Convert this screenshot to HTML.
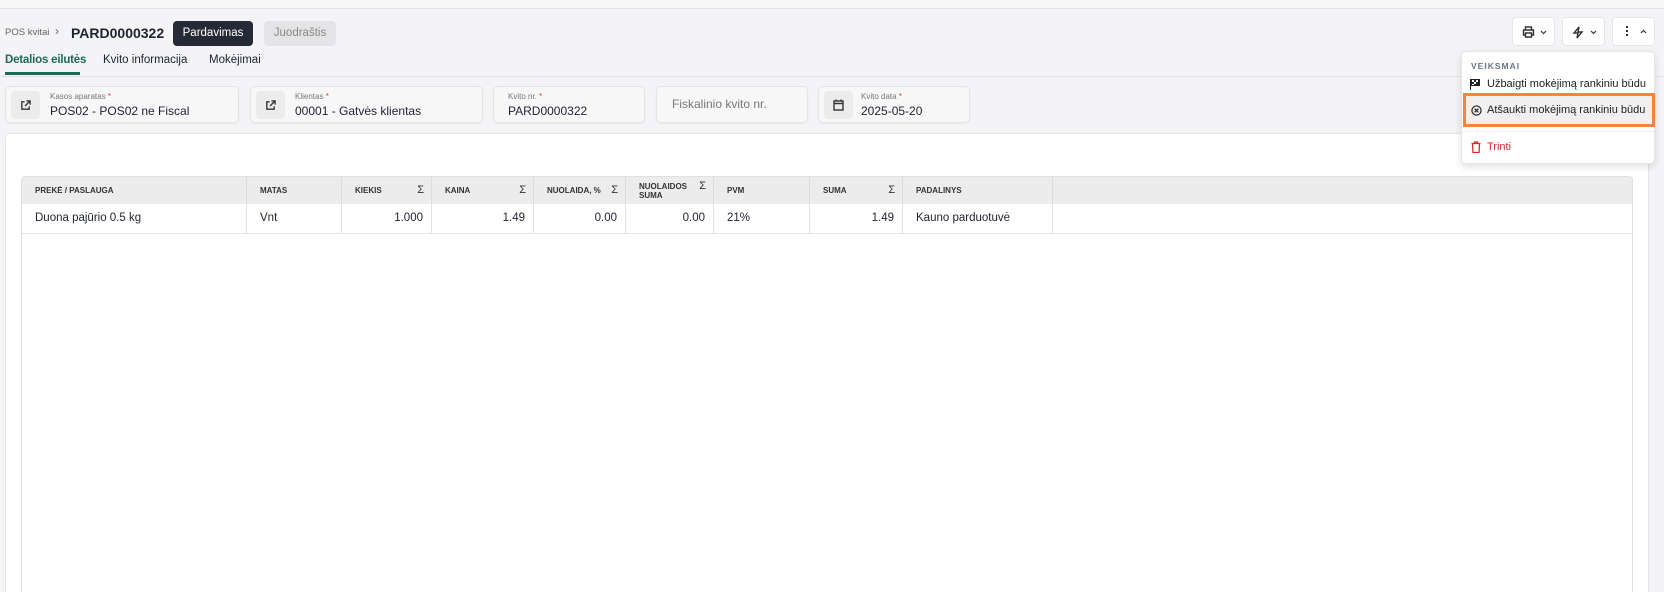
<!DOCTYPE html>
<html><head><meta charset="utf-8"><style>
*{box-sizing:border-box;margin:0;padding:0}
html,body{width:1664px;height:592px;overflow:hidden}
body{background:#f4f4f6;font-family:"Liberation Sans",sans-serif;color:#1f2330;position:relative}
.a{position:absolute;white-space:nowrap}
.topline{left:0;top:0;width:1664px;height:9px;background:#f7f7f8;border-bottom:1px solid #e3e3e6}
.card{position:absolute;top:86px;height:37px;background:#f7f7f8;border:1px solid #e4e4e7;border-radius:5px;box-shadow:0 1px 2px rgba(0,0,0,.05)}
.ib{position:absolute;left:5px;top:4px;width:29px;height:28px;background:#ececed;border-radius:4px}
.lbl{position:absolute;font-size:8px;color:#777;top:5px;white-space:nowrap}
.lbl i{color:#e23b3b;font-style:normal}
.val{position:absolute;font-size:12px;top:17px;color:#1f2330;white-space:nowrap}
.btn{position:absolute;top:17px;height:29px;width:43px;background:#fff;border:1px solid #e4e6ea;border-radius:4px}
.th{position:absolute;top:0;height:27px;font-size:8px;font-weight:bold;color:#333;line-height:27px;border-right:1px solid #dcdcdc;padding-left:13px;white-space:nowrap}
.td{position:absolute;top:27px;height:29px;font-size:11.5px;line-height:29px;border-right:1px solid #e2e2e2;padding:0 8px 0 13px;color:#1f2330}
.sg{position:absolute;right:7px;top:0;font-size:11px;font-weight:normal}
.r{text-align:right}
</style></head><body>
<div class="a topline"></div>

<div class="a" style="left:5px;top:27px;font-size:9.5px;color:#666">POS kvitai</div>
<div class="a" style="left:55px;top:24px;font-size:12px;color:#666">›</div>
<div class="a" style="left:71px;top:25px;font-size:14px;font-weight:bold;color:#1f2330">PARD0000322</div>
<div class="a" style="left:173px;top:21px;width:80px;height:25px;background:#252a36;border-radius:4px;color:#fff;font-size:11.5px;text-align:center;line-height:25px">Pardavimas</div>
<div class="a" style="left:264px;top:21px;width:72px;height:25px;background:#e4e4e6;border-radius:4px;color:#888;font-size:11.5px;text-align:center;line-height:25px">Juodraštis</div>

<div class="a" style="left:0;top:76px;width:1664px;height:1px;background:#e1e1e4"></div>
<div class="a" style="left:5px;top:54px;font-size:11.5px;color:#1d6b55;font-weight:bold;letter-spacing:-0.2px">Detalios eilutės</div>
<div class="a" style="left:5px;top:72px;width:75px;height:3px;background:#1d6b55"></div>
<div class="a" style="left:103px;top:54px;font-size:11.5px">Kvito informacija</div>
<div class="a" style="left:209px;top:54px;font-size:11.5px">Mokėjimai</div>

<div class="card" style="left:5px;width:234px"><div class="ib"><svg class="a" style="left:9px;top:9px" width="11" height="11" viewBox="0 0 12 12" fill="none" stroke="#333" stroke-width="1.5"><path d="M5 2H2v8h8V7M7 1h4v4M11 1L5.5 6.5"/></svg></div><div class="lbl" style="left:44px">Kasos aparatas <i>*</i></div><div class="val" style="left:44px">POS02 - POS02 ne Fiscal</div></div>
<div class="card" style="left:250px;width:233px"><div class="ib"><svg class="a" style="left:9px;top:9px" width="11" height="11" viewBox="0 0 12 12" fill="none" stroke="#333" stroke-width="1.5"><path d="M5 2H2v8h8V7M7 1h4v4M11 1L5.5 6.5"/></svg></div><div class="lbl" style="left:44px">Klientas <i>*</i></div><div class="val" style="left:44px">00001 - Gatvės klientas</div></div>
<div class="card" style="left:493px;width:152px"><div class="lbl" style="left:14px">Kvito nr. <i>*</i></div><div class="val" style="left:14px">PARD0000322</div></div>
<div class="card" style="left:656px;width:152px"><div class="val" style="left:15px;top:10px;color:#777">Fiskalinio kvito nr.</div></div>
<div class="card" style="left:818px;width:152px"><div class="ib"><svg class="a" style="left:9px;top:8px" width="11" height="12" viewBox="0 0 11 12" fill="none" stroke="#333" stroke-width="1.4"><rect x="1" y="2" width="9" height="9"/><path d="M1 4.5h9M3 0.5v2M8 0.5v2"/></svg></div><div class="lbl" style="left:42px">Kvito data <i>*</i></div><div class="val" style="left:42px">2025-05-20</div></div>

<div class="a" style="left:5px;top:133px;width:1644px;height:459px;background:#fff;border:1px solid #e4e4e7;border-bottom:none;border-radius:4px 4px 0 0"></div>
<div class="a" style="left:21px;top:176px;width:1612px;height:416px;border:1px solid #e0e0e0;border-bottom:none;border-radius:4px 4px 0 0;background:#fff;overflow:hidden">
 <div class="a" style="left:0;top:0;width:1612px;height:27px;background:#ececec"></div>
 <div class="a" style="left:0;top:56px;width:1612px;height:1px;background:#e2e2e2"></div>
 <div class="th" style="left:0;width:225px">PREKĖ / PASLAUGA</div>
 <div class="th" style="left:225px;width:95px">MATAS</div>
 <div class="th" style="left:320px;width:90px">KIEKIS<span class="sg">Σ</span></div>
 <div class="th" style="left:410px;width:102px">KAINA<span class="sg">Σ</span></div>
 <div class="th" style="left:512px;width:92px">NUOLAIDA, %<span class="sg">Σ</span></div>
 <div class="th" style="left:604px;width:88px;line-height:9px;padding-top:5px">NUOLAIDOS<br>SUMA<span class="sg" style="top:5px">Σ</span></div>
 <div class="th" style="left:692px;width:96px">PVM</div>
 <div class="th" style="left:788px;width:93px">SUMA<span class="sg">Σ</span></div>
 <div class="th" style="left:881px;width:150px">PADALINYS</div>
 <div class="td" style="left:0;width:225px">Duona pajūrio 0.5 kg</div>
 <div class="td" style="left:225px;width:95px">Vnt</div>
 <div class="td r" style="left:320px;width:90px">1.000</div>
 <div class="td r" style="left:410px;width:102px">1.49</div>
 <div class="td r" style="left:512px;width:92px">0.00</div>
 <div class="td r" style="left:604px;width:88px">0.00</div>
 <div class="td" style="left:692px;width:96px">21%</div>
 <div class="td r" style="left:788px;width:93px">1.49</div>
 <div class="td" style="left:881px;width:150px">Kauno parduotuvė</div>
</div>

<div class="btn" style="left:1512px"><svg class="a" style="left:9px;top:8px" width="13" height="12" viewBox="0 0 13 12" fill="none" stroke="#333" stroke-width="1.4"><path d="M3.5 4V1h6v3M3.5 9H1.5V4h10v5h-2M3.5 7h6v4h-6z"/></svg><svg class="a" style="left:27px;top:12px" width="7" height="5" viewBox="0 0 7 5" fill="none" stroke="#333" stroke-width="1.2"><path d="M1 1l2.5 2.5L6 1"/></svg></div>
<div class="btn" style="left:1562px"><svg class="a" style="left:9px;top:8px" width="12" height="13" viewBox="0 0 12 13" fill="none" stroke="#333" stroke-width="1.4"><path d="M7 1L2 7h4l-1 5 5-6H6z"/></svg><svg class="a" style="left:27px;top:12px" width="7" height="5" viewBox="0 0 7 5" fill="none" stroke="#333" stroke-width="1.2"><path d="M1 1l2.5 2.5L6 1"/></svg></div>
<div class="btn" style="left:1612px"><div class="a" style="left:13px;top:8px;width:2px;height:2px;background:#333;box-shadow:0 4px 0 #333,0 8px 0 #333"></div><svg class="a" style="left:27px;top:11px" width="7" height="5" viewBox="0 0 7 5" fill="none" stroke="#333" stroke-width="1.2"><path d="M1 4l2.5-2.5L6 4"/></svg></div>

<div class="a" style="left:1461px;top:51px;width:194px;height:113px;background:#fff;border:1px solid #e6e6e8;border-radius:5px;box-shadow:0 3px 8px rgba(0,0,0,.12)">
 <div class="a" style="left:9px;top:9px;font-size:8.5px;font-weight:bold;color:#6b7385;letter-spacing:1px">VEIKSMAI</div>
 <svg class="a" style="left:8px;top:27px" width="10" height="11" viewBox="0 0 10 11"><path d="M0 0h10v7H1v4H0z" fill="#222"/><path d="M2 1h2v2H2zM6 1h2v2H6zM4 3h2v2H4zM2 5h2v1H2z" fill="#fff"/></svg>
 <div class="a" style="left:25px;top:26px;font-size:11px;color:#222">Užbaigti mokėjimą rankiniu būdu</div>
 <div class="a" style="left:1px;top:41px;width:192px;height:34px;background:#f0f0f0;border:3px solid #f7843e"></div>
 <svg class="a" style="left:9px;top:53px" width="11" height="11" viewBox="0 0 12 12" fill="none" stroke="#222" stroke-width="1.3"><circle cx="6" cy="6" r="5"/><path d="M4 4l4 4M8 4l-4 4"/></svg>
 <div class="a" style="left:25px;top:52px;font-size:11px;color:#222">Atšaukti mokėjimą rankiniu būdu</div>
 <div class="a" style="left:0;top:79px;width:192px;height:1px;background:#eee"></div>
 <svg class="a" style="left:9px;top:89px" width="10" height="12" viewBox="0 0 10 12" fill="none" stroke="#d12a2a" stroke-width="1.3"><path d="M0.5 2.5h9M3.5 2.5V1h3v1.5M1.5 2.5l.5 9h6l.5-9"/></svg>
 <div class="a" style="left:25px;top:89px;font-size:11px;color:#d12a2a">Trinti</div>
</div>
</body></html>
